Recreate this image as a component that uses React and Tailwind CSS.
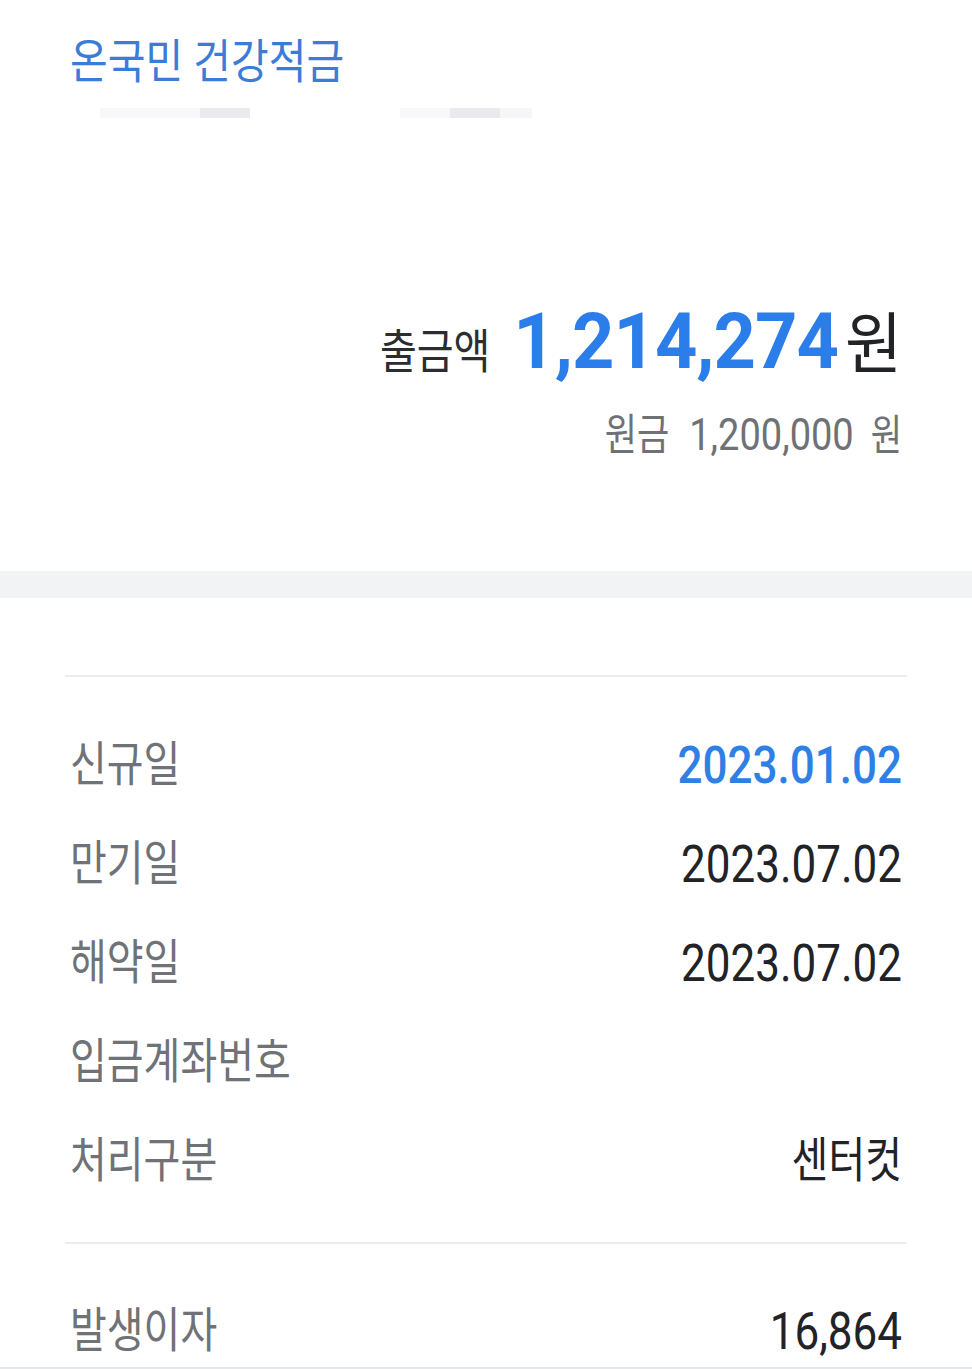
export default function App() {
  const rows = [
    { label: "신규일", value: "2023.01.02", blue: true },
    { label: "만기일", value: "2023.07.02" },
    { label: "해약일", value: "2023.07.02" },
    { label: "입금계좌번호", value: "" },
    { label: "처리구분", value: "센터컷", korean: true },
  ];

  return (
    <div className="w-full min-h-screen bg-white font-['Roboto','Noto_Sans_CJK_KR',sans-serif] overflow-hidden">
      {/* Top section */}
      <section className="h-[571px] flex flex-col">
        <div className="pt-[41px] pl-[70px]">
          <h1 className="text-[41px] leading-[42px] font-normal text-[#3b7dd6]">
            <span className="inline-block scale-y-[1.15]">온국민 건강적금</span>
          </h1>
        </div>
        <div className="mt-[25px] flex h-[10px] pl-[100px]">
          <div className="w-[100px] bg-[#f8f8fa]" />
          <div className="w-[50px] bg-[#ebebef]" />
          <div className="w-[150px]" />
          <div className="w-[50px] bg-[#f8f8fa]" />
          <div className="w-[50px] bg-[#eaeaee]" />
          <div className="w-[32px] bg-[#f6f6f8]" />
        </div>

        <div className="mt-[188px] pr-[70px] flex justify-end items-baseline">
          <span className="text-[40px] leading-none text-[#2b2d31] inline-block origin-[50%_84%] scale-y-[1.17] mr-[23px]">
            출금액
          </span>
          <span className="text-[74px] leading-none font-bold text-[#2b7de9] tracking-[-1px] inline-block origin-[50%_84%] scale-y-[1.05]">
            1,214,274
          </span>
          <span className="text-[62px] leading-none text-[#222327] inline-block origin-[50%_84%] scale-y-[1.08] ml-[7px]">
            원
          </span>
        </div>

        <div className="mt-[38px] pr-[70px] flex justify-end items-baseline text-[#6e7176]">
          <span className="text-[35px] leading-none inline-block origin-[50%_84%] scale-y-[1.22]">원금</span>
          <span className="text-[38px] leading-none inline-block origin-[50%_84%] scale-y-[1.18] ml-[20px]">
            1,200,000
          </span>
          <span className="text-[34px] leading-none inline-block origin-[50%_84%] scale-y-[1.25] ml-[17px]">원</span>
        </div>
      </section>

      {/* Gray band */}
      <div className="h-[27px] bg-[#f2f3f5]" />

      {/* Details */}
      <section className="px-[65px] pt-[77px]">
        <div className="h-[2px] bg-[#ebedef]" />
        <div className="pt-[38px] px-[5px]">
          {rows.map((r) => (
            <div key={r.label} className="h-[99px] flex items-center justify-between">
              <span className="text-[40px] leading-none text-[#6f7277] inline-block scale-y-[1.2]">
                {r.label}
              </span>
              {r.value &&
                (r.korean ? (
                  <span className="text-[40px] leading-none text-[#222327] inline-block scale-y-[1.2]">
                    {r.value}
                  </span>
                ) : (
                  <span
                    className={
                      r.blue
                        ? "text-[44px] leading-none font-medium text-[#2f80e5] inline-block scale-y-[1.18]"
                        : "text-[44px] leading-none text-[#222327] inline-block scale-y-[1.18]"
                    }
                  >
                    {r.value}
                  </span>
                ))}
            </div>
          ))}
        </div>
        <div className="mt-[32px] h-[2px] bg-[#ebedef]" />
        <div className="h-[123px] pt-[50px] px-[5px] flex items-center justify-between">
          <span className="text-[40px] leading-none text-[#6f7277] inline-block scale-y-[1.2]">발생이자</span>
          <span className="text-[44px] leading-none text-[#222327] inline-block scale-y-[1.18]">16,864</span>
        </div>
      </section>
      <div className="h-[2px] bg-[#e6e7e9]" />
    </div>
  );
}
